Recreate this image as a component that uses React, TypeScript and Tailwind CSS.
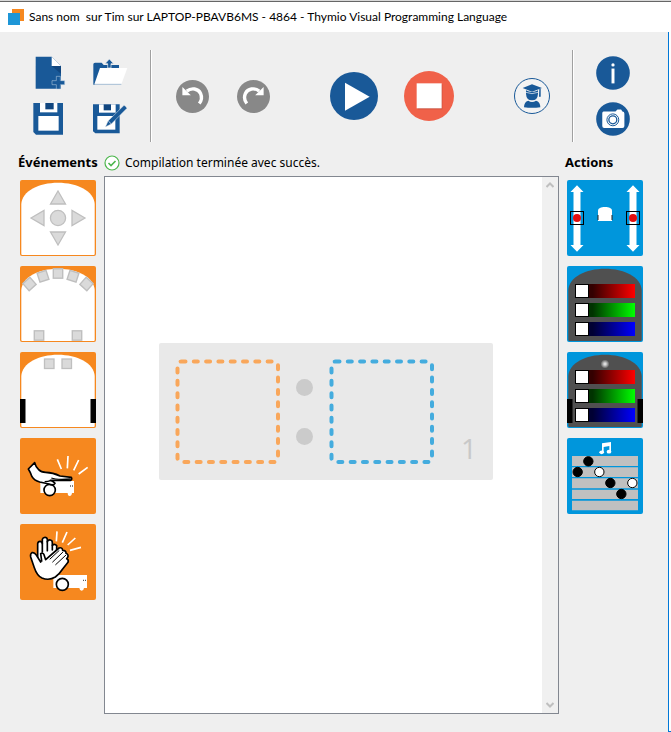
import type { ReactNode } from 'react';

type IconProps = { label: string; viewBox: string; size: string; children: ReactNode };

function IconButton({ label, viewBox, size, children }: IconProps) {
  return (
    <button type="button" aria-label={label} title={label} className={`block shrink-0 ${size}`}>
      <svg viewBox={viewBox} className="block h-full w-full">
        {children}
      </svg>
    </button>
  );
}

function Tile({ label, viewBox, color, children }: { label: string; viewBox: string; color: string; children: ReactNode }) {
  return (
    <button type="button" aria-label={label} title={label} className={`block h-[76px] w-[76px] overflow-hidden rounded-xs ${color}`}>
      <svg viewBox={viewBox} className="block h-full w-full">
        {children}
      </svg>
    </button>
  );
}

// Thymio seen from above
function RobotBody({ fill }: { fill: string }) {
  return <path d="M1.3 74V24C2 11 19 2.700 38 2.700S74 11 74.700 24V74Q74.700 75 73.700 75H2.300Q1.300 75 1.300 74Z" fill={fill} />;
}

const sensors = [
  { x: 9.5, y: 18, angle: -42 },
  { x: 23, y: 10.3, angle: -18 },
  { x: 38, y: 7.5, angle: 0 },
  { x: 53, y: 10.3, angle: 18 },
  { x: 66.5, y: 18, angle: 42 },
  { x: 19, y: 69.5, angle: 0 },
  { x: 57, y: 69.5, angle: 0 },
];

const sliders = [
  { id: 'red', y: 18, from: '#300', to: '#f00' },
  { id: 'green', y: 37, from: '#030', to: '#0f0' },
  { id: 'blue', y: 56, from: '#003', to: '#00f' },
];

const notes = [
  { x: 85, y: 349, fill: '#000' },
  { x: 53, y: 381, fill: '#000' },
  { x: 118, y: 381, fill: '#fff' },
  { x: 151, y: 414, fill: '#000' },
  { x: 217, y: 414, fill: '#fff' },
  { x: 184, y: 447, fill: '#000' },
];

function ColorSliders({ name }: { name: string }) {
  return (
    <>
      {sliders.map((s) => (
        <g key={s.id}>
          <linearGradient id={`${name}-${s.id}`}>
            <stop offset="0.1" stopColor={s.from} />
            <stop offset="1" stopColor={s.to} />
          </linearGradient>
          <rect x="21" y={s.y} width="47" height="14" fill={`url(#${name}-${s.id})`} />
          <rect x="8.5" y={s.y + 0.5} width="13" height="13" fill="#fff" stroke="#000" />
        </g>
      ))}
    </>
  );
}

function FileButtons() {
  return (
    <div className="grid grid-cols-[36px_36px] gap-x-[25px] gap-y-[10px] pt-1 pl-[31px]">
      <IconButton label="Nouveau" viewBox="33 27 108 108" size="h-9 w-9">
        <path d="M47 35H95L123 63V131H47Z" fill="#195998" />
        <path d="M95 35V63H123Z" fill="#fff" />
        <path d="M95 63H123V86Z" fill="#11467f" />
        <path d="M109 94h12v13h13v12h-13v13h-12v-13H96v-12h13Z" fill="#195998" stroke="#c5d6e6" strokeWidth="1.5" />
      </IconButton>
      <IconButton label="Ouvrir" viewBox="216 27 108 108" size="h-9 w-9">
        <path d="M220 119V58Q220 53 225 53H245L251 60H297V70H242L224 119Z" fill="#195998" />
        <path d="M263 69V56H255L268 42L281 56H273V69Z" fill="#195998" stroke="#efefef" strokeWidth="2" />
        <path d="M240 69H322L304 118H223Z" fill="#fff" />
        <path d="M223 118H304" stroke="#7fa1c4" strokeWidth="2" />
      </IconButton>
      <IconButton label="Enregistrer" viewBox="33 165 108 108" size="h-9 w-9">
        <path d="M40 174H129V269H48L40 261Z" fill="#195998" />
        <path d="M60 174H112V202H60Z" fill="#fff" />
        <path d="M76 174H101V193H76Z" fill="#11467f" />
        <path d="M55 213H116V257H55Z" fill="#fff" />
      </IconButton>
      <IconButton label="Enregistrer sous" viewBox="216 165 108 108" size="h-9 w-9">
        <path d="M219 178H299V265H226L219 259Z" fill="#195998" />
        <path d="M237 178H287V203H237Z" fill="#fff" />
        <path d="M251 178H273V196H251Z" fill="#11467f" />
        <path d="M232 213H286V254H232Z" fill="#fff" />
        <path d="M312 181Q317 182 321 190L274 237L256 246L264 228Z" fill="#195998" stroke="#efefef" strokeWidth="1.5" />
        <path d="M265 228L273 236" stroke="#fff" strokeWidth="2" />
      </IconButton>
    </div>
  );
}

function RunButtons() {
  return (
    <div className="flex flex-1 items-center justify-between pr-[22px] pl-6">
      <div className="flex items-center gap-7">
        <IconButton label="Annuler" viewBox="466 103 98 98" size="h-[33px] w-[33px]">
          <circle cx="515" cy="152" r="49" fill="#888" />
          <path d="M498 136C512 125 532 128 539 143Q546 159 535 173" fill="none" stroke="#fff" strokeWidth="10" />
          <path d="M485 124V148H510Z" fill="#fff" />
        </IconButton>
        <IconButton label="Refaire" viewBox="466 103 98 98" size="h-[33px] w-[33px]">
          <circle cx="515" cy="152" r="49" fill="#888" />
          <path d="M532 136C518 125 498 128 491 143Q484 159 495 173" fill="none" stroke="#fff" strokeWidth="10" />
          <path d="M545 124V148H520Z" fill="#fff" />
        </IconButton>
      </div>
      <div className="flex items-center gap-[26px]">
        <IconButton label="Exécuter" viewBox="33 80 144 144" size="h-12 w-12">
          <circle cx="105" cy="152" r="72" fill="#195998" />
          <path d="M78 112L152 154L78 196Z" fill="#fff" />
        </IconButton>
        <IconButton label="Arrêter" viewBox="253 76 150 150" size="h-[50px] w-[50px]">
          <circle cx="328" cy="151" r="75" fill="#f06149" />
          <path d="M294 116H368V191H294Z" fill="#c9503d" />
          <path d="M291 113H366V188H291Z" fill="#fff" />
        </IconButton>
      </div>
      <IconButton label="Tutoriel" viewBox="582 97 108 108" size="h-9 w-9">
        <circle cx="636" cy="151" r="52.5" fill="#f3f3f3" stroke="#195998" strokeWidth="3" />
        <g fill="#195998">
          <path d="M608 127L636 116L666 127L636 138Z" />
          <path d="M618 134Q636 144 654 134V144Q653 164 636 164Q619 164 618 144Z" />
          <path d="M658 129H662V153H657Z" />
          <path d="M612 185Q612 168 625 165Q636 173 648 165Q661 168 661 185Q636 188 612 185Z" />
        </g>
        <path d="M618 140Q636 148 654 140" fill="none" stroke="#fff" strokeWidth="2" />
      </IconButton>
    </div>
  );
}

function InfoButtons() {
  return (
    <div className="flex w-[94px] flex-col justify-center gap-3 pl-[22px]">
      <IconButton label="Informations" viewBox="829 31 103 103" size="h-[34px] w-[34px]">
        <circle cx="880.5" cy="82.5" r="51" fill="#195998" />
        <circle cx="880.5" cy="58" r="5" fill="#fff" />
        <path d="M876 69H885V114H876Z" fill="#fff" />
      </IconButton>
      <IconButton label="Capture d'écran" viewBox="829 169 103 103" size="h-[34px] w-[34px]">
        <circle cx="880.5" cy="220.5" r="51" fill="#195998" />
        <path d="M852 198H888L894 192H905L909 198Q915 198 915 204V242Q915 248 909 248H854Q848 248 848 242V203Q848 198 852 198Z" fill="#fff" />
        <circle cx="880" cy="223" r="18" fill="none" stroke="#195998" strokeWidth="3" />
        <circle cx="880" cy="223" r="12" fill="none" stroke="#195998" strokeWidth="4" />
      </IconButton>
    </div>
  );
}

function EventTiles() {
  return (
    <>
      <Tile label="Boutons" viewBox="0 0 76 76" color="bg-[#f6881f]">
        <RobotBody fill="#fff" />
        <g fill="#dadada" stroke="#bfbfbf" strokeWidth="1.3">
          <path d="M38 11L45.500 24H30.500Z" />
          <path d="M38 65L45.500 52H30.500Z" />
          <path d="M11 38L24 30.500V45.500Z" />
          <path d="M65 38L52 30.500V45.500Z" />
          <circle cx="38" cy="38" r="7.6" />
        </g>
      </Tile>
      <Tile label="Capteurs de proximité" viewBox="0 0 76 76" color="bg-[#f6881f]">
        <RobotBody fill="#fff" />
        {sensors.map((s) => (
          <rect key={`${s.x}-${s.y}`} x={s.x - 4.7} y={s.y - 4.7} width="9.4" height="9.4" transform={`rotate(${s.angle} ${s.x} ${s.y})`} fill="#dadada" stroke="#bfbfbf" strokeWidth="1.4" />
        ))}
      </Tile>
      <Tile label="Capteurs de sol" viewBox="0 0 76 76" color="bg-[#f6881f]">
        <RobotBody fill="#fff" />
        <path d="M0 47H5.500V71H0ZM70.500 47H76V71H70.500Z" />
        <g fill="#dadada" stroke="#bfbfbf" strokeWidth="1.3">
          <rect x="24.5" y="7" width="9.5" height="9.5" />
          <rect x="42" y="7" width="9.5" height="9.5" />
        </g>
      </Tile>
      <Tile label="Choc" viewBox="30 24 228 228" color="bg-[#f6881f]">
        <path d="M142 88L154 117M174 78L172 115M206 90L191 121M233 112L206 132" stroke="#fff" strokeWidth="5" />
        <path d="M91 153H192V189H186Q185 198 179 198T173 189H91Z" fill="#fff" />
        <path d="M180 168H182M186 168H188" stroke="#000" strokeWidth="4" />
        <circle cx="119" cy="180" r="17" fill="#fff" stroke="#000" strokeWidth="5" />
        <path d="M74 98L55 117Q62 128 66 140Q72 151 89 156L117 162Q130 168 135 160Q130 154 121 151L182 151Q187 148 184 142L150 138Q129 127 107 127Q93 127 86 119Q77 111 74 98Z" fill="#fff" stroke="#000" strokeWidth="5" strokeLinejoin="round" />
        <path d="M124 144Q138 150 182 147M104 155Q114 155 122 152" fill="none" stroke="#000" strokeWidth="4" />
      </Tile>
      <Tile label="Clap" viewBox="30 282 228 228" color="bg-[#f6881f]">
        <path d="M141 304L139 334M171 306L157 338M196 324L173 345M213 352L180 361" stroke="#fff" strokeWidth="5" />
        <path d="M130 435H231V474H222Q221 482 215 482T208 474H130Z" fill="#fff" />
        <path d="M219 451H221M226 451H228" stroke="#000" strokeWidth="4" />
        <circle cx="157" cy="463" r="18" fill="#fff" stroke="#000" strokeWidth="5" />
        <g fill="#fff" stroke="#000" strokeWidth="5" strokeLinejoin="round" strokeLinecap="round">
          <path d="M83 390V341Q84 334 90 334T97 341V328Q99 322 105 322T112 328V335Q115 329 121 330T127 338V346Q134 340 140 347V390L110 415Z" />
          <path d="M97 341V366M112 335V362M127 346V360" />
          <path d="M92 396L78 374Q73 366 66 368Q60 372 62 381L73 413Q81 437 96 444Q117 453 136 441Q150 430 158 417L174 397Q177 389 170 386L173 382Q177 374 168 370Q169 361 158 361Q157 351 147 354L107 389L102 374Q98 367 92 371L95 393" />
          <path d="M147 362L120 387M158 367L128 396M167 376L137 404" strokeWidth="3" />
        </g>
      </Tile>
    </>
  );
}

function ActionTiles() {
  return (
    <>
      <Tile label="Moteurs" viewBox="0 0 76 76" color="bg-[#0096dc]">
        <g fill="#fff">
          <path d="M10 5.300L16.500 12H13.500V65H16.500L10 71.700L3.500 65H6.500V12H3.500Z" />
          <path d="M66 5.300L72.500 12H69.500V65H72.500L66 71.700L59.500 65H62.500V12H59.500Z" />
          <path d="M31 41V31C31 28 34 27 38 27S45 28 45 31V41Z" />
        </g>
        <path d="M31 35V40M45 35V40" stroke="#222" />
        <g fill="none" stroke="#000">
          <rect x="3.5" y="31.5" width="13" height="13" />
          <rect x="59.5" y="31.5" width="13" height="13" />
        </g>
        <circle cx="10" cy="38" r="4" fill="#e20e0e" />
        <circle cx="66" cy="38" r="4" fill="#e20e0e" />
      </Tile>
      <Tile label="Couleur du dessus" viewBox="0 0 76 76" color="bg-[#0096dc]">
        <RobotBody fill="#505050" />
        <ColorSliders name="top" />
      </Tile>
      <Tile label="Couleur du dessous" viewBox="0 0 76 76" color="bg-[#0096dc]">
        <radialGradient id="lamp">
          <stop offset="0.2" stopColor="#ddd" />
          <stop offset="1" stopColor="#505050" />
        </radialGradient>
        <RobotBody fill="#505050" />
        <path d="M0 47H5.500V71H0ZM70.500 47H76V71H70.500Z" />
        <circle cx="38" cy="12" r="4.5" fill="url(#lamp)" />
        <ColorSliders name="bottom" />
      </Tile>
      <Tile label="Musique" viewBox="21 279 228 228" color="bg-[#0096dc]">
        <path d="M36 333H234V363H36ZM36 367H234V396H36ZM36 400H234V430H36ZM36 434H234V462H36ZM36 467H234V496H36Z" fill="#c0c0c0" />
        <g fill="#fff">
          <path d="M126 295L153 291V320H148V303L131 306V323H126Z" />
          <ellipse cx="125" cy="322" rx="7" ry="5.5" />
          <ellipse cx="147" cy="320" rx="7" ry="5.5" />
        </g>
        {notes.map((n) => (
          <circle key={`${n.x}-${n.y}`} cx={n.x} cy={n.y} r="14" fill={n.fill} stroke="#000" strokeWidth="3" />
        ))}
      </Tile>
    </>
  );
}

function Slot({ label, color }: { label: string; color: string }) {
  return (
    <svg role="img" aria-label={label} viewBox="0 0 105 105" className={`h-[105px] w-[105px] shrink-0 ${color}`}>
      <rect x="2.5" y="2.5" width="100.5" height="100.5" rx="4" fill="none" stroke="currentColor" strokeWidth="4" strokeLinecap="round" strokeDasharray="4 8.300" />
    </svg>
  );
}

function ScrollArrow({ label, path }: { label: string; path: string }) {
  return (
    <button type="button" aria-label={label} className="flex h-4 w-4 items-center justify-center">
      <svg viewBox="0 0 8 6" className="h-[6px] w-2">
        <path d={path} fill="none" stroke="#bfbfbf" strokeWidth="2" />
      </svg>
    </button>
  );
}

export default function App() {
  return (
    <div className="flex min-h-screen flex-col bg-[#efefef] font-['Noto_Sans',sans-serif] text-black">
      <div className="h-[2px] border-b border-[#666] bg-[#d8d8d8]" />
      <header className="flex h-[30px] items-center gap-[5px] bg-white pl-2">
        <svg viewBox="0 0 16 16" className="h-4 w-4">
          <path d="M4 0H16V12H4Z" fill="#f6881f" />
          <path d="M0 4H12V16H0Z" fill="#1e96d7" />
        </svg>
        <h1 className="text-[12px] whitespace-pre font-['Lato',sans-serif]">
          {'Sans nom  sur Tim sur LAPTOP-PBAVB6MS - 4864 - Thymio Visual Programming Language'}
        </h1>
      </header>

      <div className="flex flex-1">
        <main className="flex min-w-0 flex-1 flex-col pt-[18px] pb-[18px]">
          {/* Toolbar */}
          <div className="flex h-[92px]">
            <div className="w-[150px]">
              <FileButtons />
            </div>
            <div className="w-[2px] border-l border-[#a0a0a0] bg-white" />
            <RunButtons />
            <div className="w-[2px] border-l border-[#a0a0a0] bg-white" />
            <InfoButtons />
          </div>

          {/* Headings and compiler status */}
          <div className="flex h-[34px] items-center pt-2 pl-[18px] text-[13px]">
            <h2 className="w-[86px] font-bold">Événements</h2>
            <p role="status" className="flex flex-1 items-center gap-[5px] text-[12px]">
              <svg viewBox="0 0 16 16" className="h-4 w-4">
                <circle cx="8" cy="8" r="7" fill="#fff" stroke="#4cb64c" strokeWidth="1.2" />
                <path d="M4.500 8L7 10.500L11.500 6" fill="none" stroke="#4cb64c" strokeWidth="1.6" />
              </svg>
              Compilation terminée avec succès.
            </p>
            <h2 className="w-[103px] font-bold">Actions</h2>
          </div>

          {/* Blocks and program */}
          <div className="flex flex-1 gap-2 pr-[25px] pl-5">
            <div className="flex flex-col gap-[10px] pt-1">
              <EventTiles />
            </div>
            <section aria-label="Programme" className="flex flex-1 border border-[#828790] bg-white">
              <div className="flex flex-1 items-start justify-center pt-[166px] pl-[5px]">
                <div className="flex w-[334px] items-start rounded-xs bg-[#e9e9e9] p-4">
                  <Slot label="Événement" color="text-[#f9a75b]" />
                  <div className="flex h-[105px] flex-1 flex-col items-center justify-center gap-8">
                    <span className="h-[17px] w-[17px] rounded-full bg-[#cbcbcb]" />
                    <span className="h-[17px] w-[17px] rounded-full bg-[#cbcbcb]" />
                  </div>
                  <Slot label="Action" color="text-[#44acde]" />
                  <span className="w-[43px] self-end text-right text-[28px] leading-[32px] text-[#c8c8c8] font-['Open_Sans',sans-serif]">1</span>
                </div>
              </div>
              <div className="flex w-4 flex-col justify-between bg-[#f0f0f0]">
                <ScrollArrow label="Défiler vers le haut" path="M0.500 5L4 1.500L7.500 5" />
                <ScrollArrow label="Défiler vers le bas" path="M0.500 1L4 4.500L7.500 1" />
              </div>
            </section>
            <div className="flex flex-col gap-[10px] pt-1">
              <ActionTiles />
            </div>
          </div>
        </main>
        <div className="w-[3px] border-b border-l border-[#0078d7] bg-white" />
      </div>
    </div>
  );
}
